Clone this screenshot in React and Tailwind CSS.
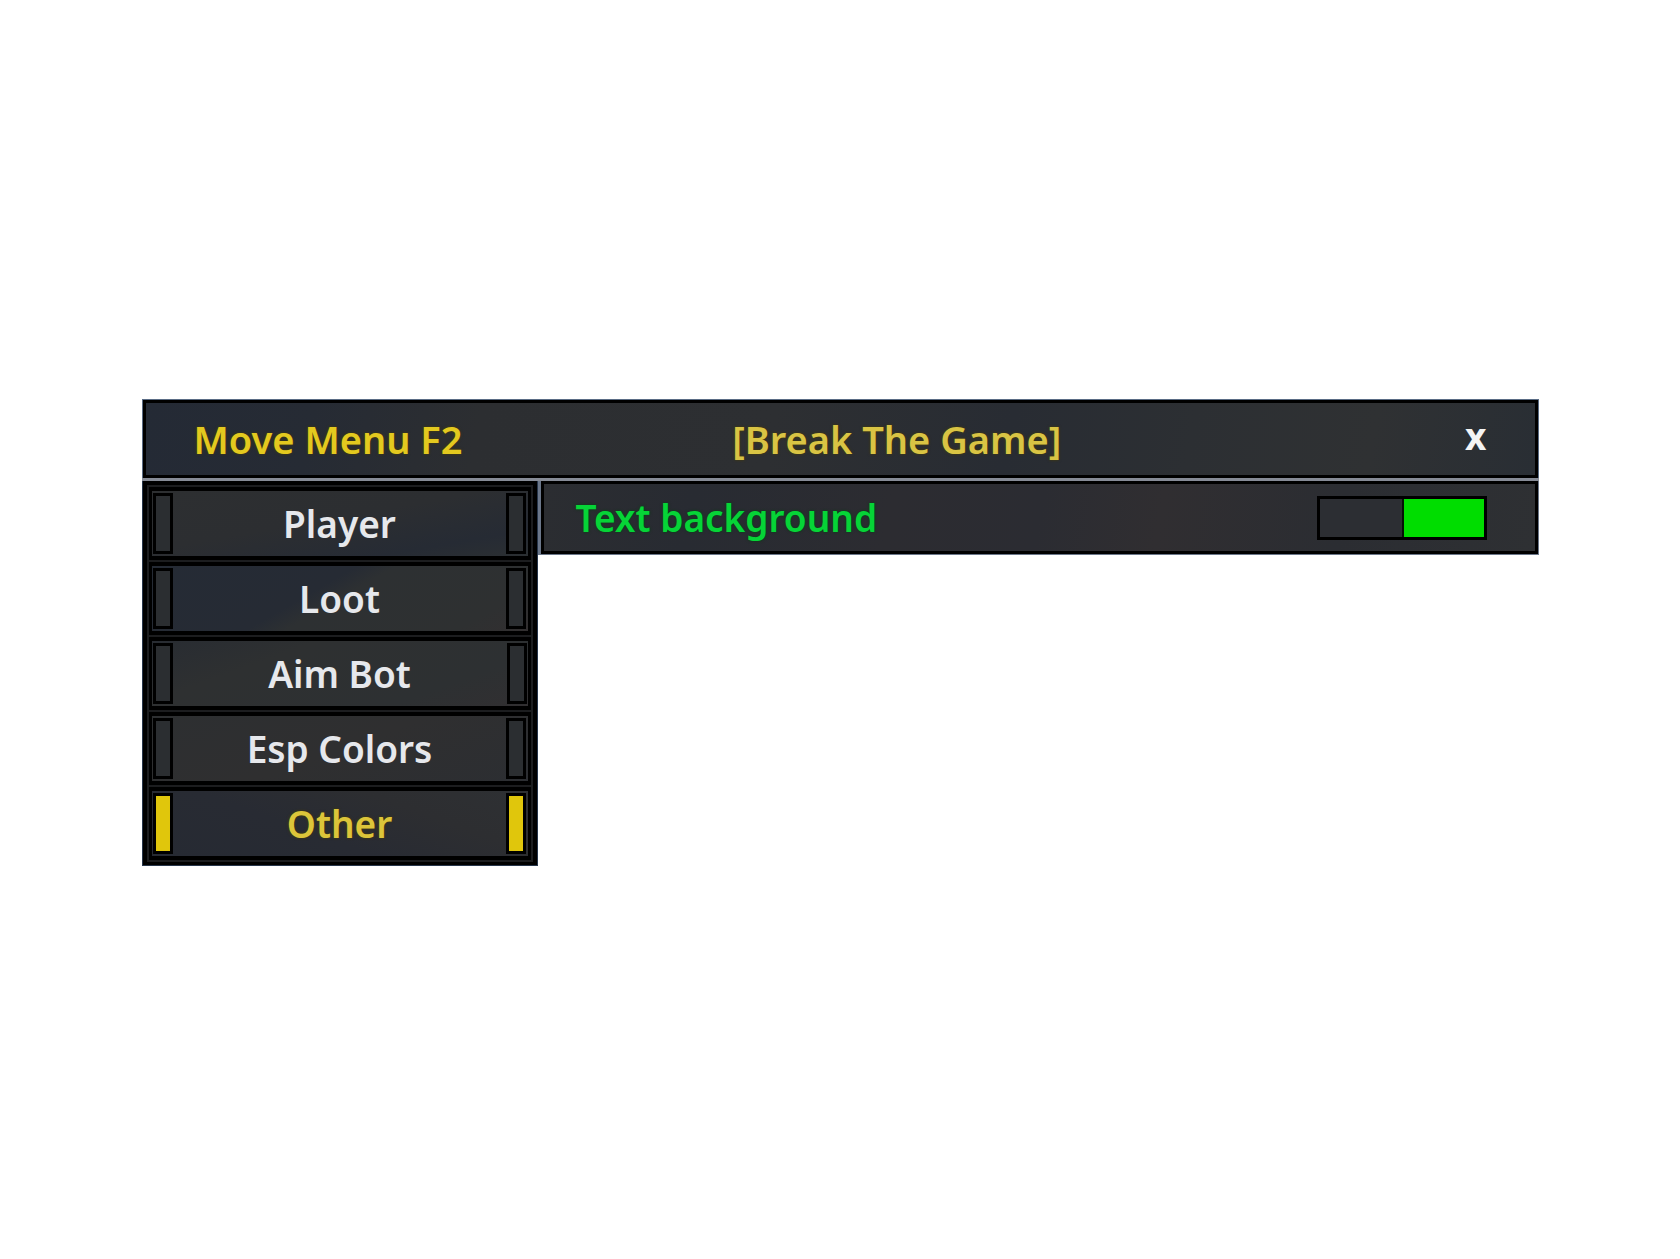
import React, { useState } from 'react';
import clsx from 'clsx';

const TABS = ['Player', 'Loot', 'Aim Bot', 'Esp Colors', 'Other'];

const ROW_BG = {
  'Player': 'bg-[linear-gradient(170deg,#2d2f31_0%,#2c2e31_45%,#262b34_80%,#2b2f32_100%)]',
  'Loot': 'bg-[linear-gradient(150deg,#252b35_0%,#262b34_42%,#2d3032_50%,#2e3031_85%,#322f30_100%)]',
  'Aim Bot': 'bg-[linear-gradient(160deg,#282c32_0%,#2e3031_30%,#2d3032_75%,#312f31_100%)]',
  'Esp Colors': 'bg-[linear-gradient(160deg,#2d2f31_0%,#2f2f30_50%,#2c2e32_100%)]',
  'Other': 'bg-[linear-gradient(20deg,#262a33_0%,#282b33_40%,#2d2e31_70%,#2e3033_100%)]',
};

// small bars at both ends of a menu row
function Marker({ active }) {
  return (
    <span
      className={clsx(
        'w-5 self-stretch border-3 border-black',
        active ? 'bg-[#e0c60c]' : 'bg-[#2b2e31]'
      )}
    />
  );
}

function MenuButton({ label, active, onClick }) {
  return (
    <button
      type="button"
      onClick={onClick}
      className={clsx(
        'flex h-[73px] w-full items-center justify-between border-x-3 border-y-4 border-black px-px py-0.5',
        ROW_BG[label],
        active ? 'text-[#dcc53a] [text-shadow:0_0_3px_#4a3e00]' : 'text-[#e6e8ec]'
      )}
    >
      <Marker active={active} />
      <span>{label}</span>
      <Marker active={active} />
    </button>
  );
}

export default function App() {
  const [tab, setTab] = useState('Other');
  const [textBg, setTextBg] = useState(true);
  const [open, setOpen] = useState(true);

  return (
    <div className="flex min-h-screen items-center justify-center bg-white px-4 pt-1.5 font-['Noto_Sans',sans-serif] text-[37px] leading-[48px] font-semibold">
      {open && (
        <div className="w-full max-w-[1397px]">
          {/* title bar */}
          <header className="border border-[#5a6c85] border-b-0">
            <div className="grid h-[78px] grid-cols-[5fr_6fr_1fr] items-center border-3 border-black bg-[linear-gradient(100deg,#242a35_0%,#262b34_12%,#2c2e31_24%,#2d2f32_45%,#282c33_62%,#2c2f33_75%,#2f3133_88%,#292e34_100%)] pr-12 pl-12 text-[38px]">
              <span className="text-[#e3c91f] [text-shadow:0_0_3px_#4a3e00]">Move Menu F2</span>
              <h1 className="text-[#d9c444] [text-shadow:0_0_3px_#4a3e00]">[Break The Game]</h1>
              <button
                type="button"
                aria-label="Close"
                onClick={() => setOpen(false)}
                className="justify-self-end pb-1.5 text-[37px] font-bold text-[#f4f4f4]"
              >
                x
              </button>
            </div>
          </header>

          <div className="h-[3px] bg-[#868b96]" />

          <div className="flex items-start">
            {/* menu */}
            <nav className="w-[396px] shrink-0 border border-t-0 border-[#27364b] bg-black px-1 pt-1 pb-[3px]">
              <div className="flex flex-col gap-0.5 bg-[#1c1d1f] p-0.5">
                {TABS.map(name => (
                  <MenuButton
                    key={name}
                    label={name}
                    active={tab === name}
                    onClick={() => setTab(name)}
                  />
                ))}
              </div>
            </nav>

            {/* options */}
            <section className="flex-1 border border-t-0 border-l-3 border-[#6b778a]">
              <div className="flex h-[73px] items-center justify-between border-3 border-black bg-[linear-gradient(100deg,#2b2d31_0%,#282b32_15%,#2c2c31_35%,#2b2c32_50%,#302e31_62%,#2b2d32_80%,#2e3033_100%)] pr-12 pl-8">
                <label htmlFor="text-bg" className="text-[#06d437] [text-shadow:0_0_3px_#004410]">Text background</label>
                <input
                  id="text-bg"
                  type="checkbox"
                  checked={textBg}
                  onChange={e => setTextBg(e.target.checked)}
                  className="flex h-11 w-[170px] appearance-none border-3 border-black bg-[#2c2e33] before:h-full before:w-1/2 before:border-l-2 before:border-[#061006] before:bg-[#55585c] checked:before:ml-auto checked:before:bg-[#00dd00]"
                />
              </div>
            </section>
          </div>
        </div>
      )}
    </div>
  );
}
